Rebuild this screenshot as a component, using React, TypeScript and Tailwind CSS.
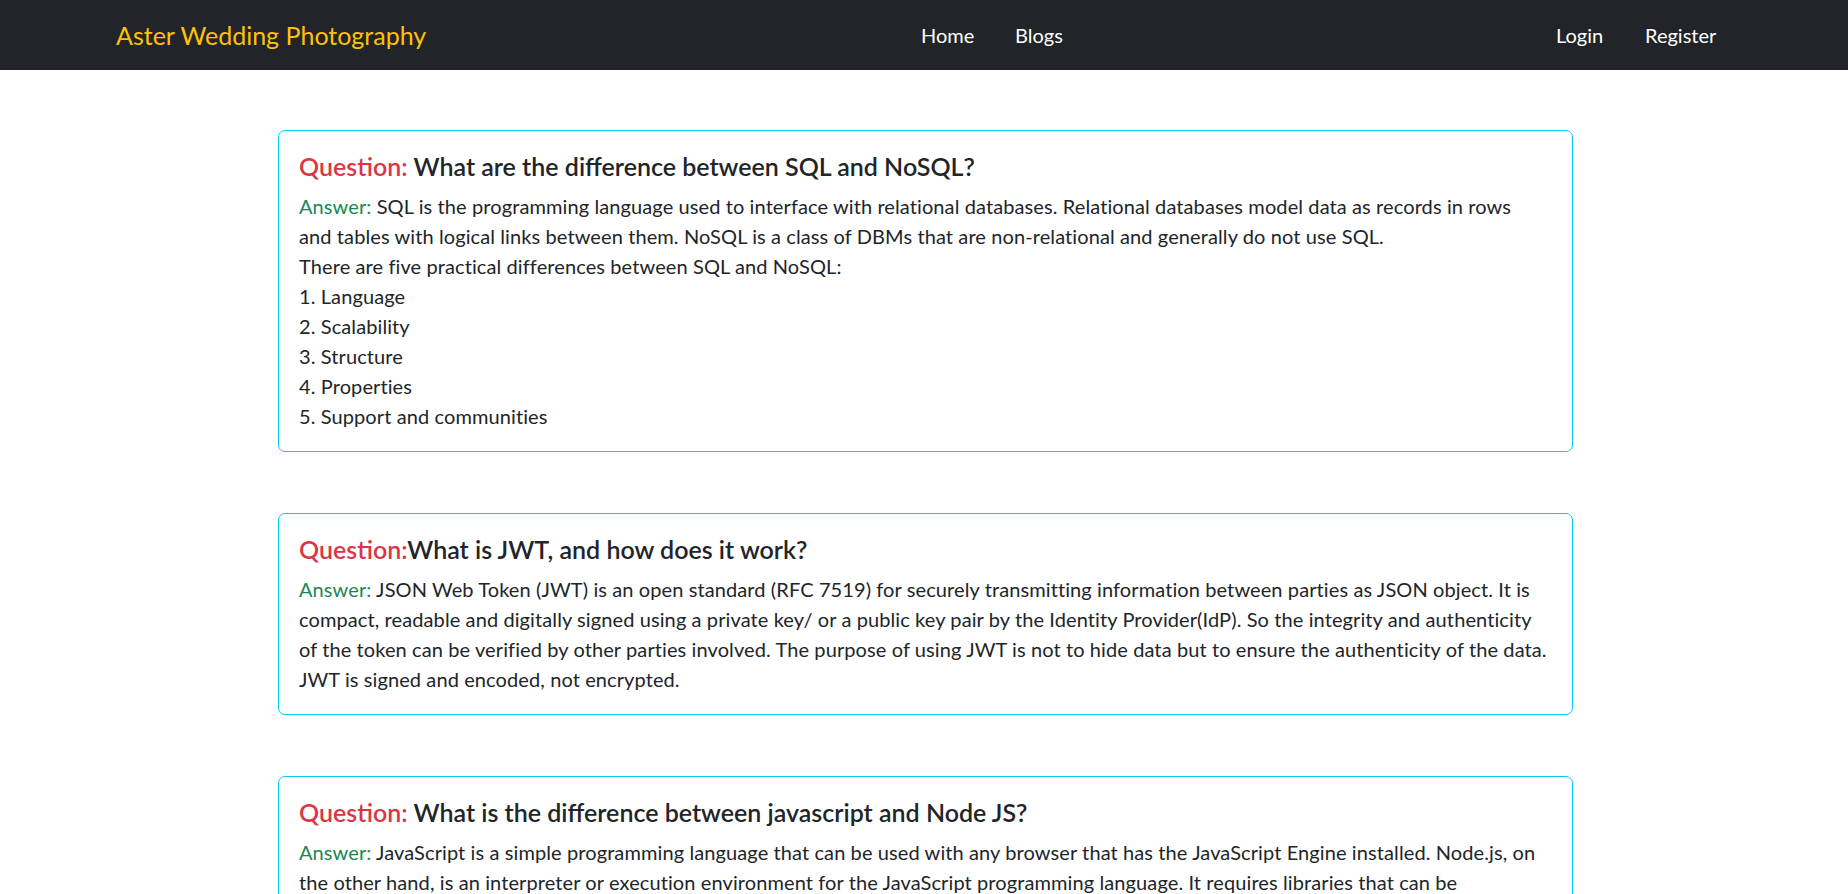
const faqs = [
  {
    question: "What are the difference between SQL and NoSQL?",
    spaced: true,
    answer: [
      "SQL is the programming language used to interface with relational databases. Relational databases model data as records in rows and tables with logical links between them. NoSQL is a class of DBMs that are non-relational and generally do not use SQL.",
      "There are five practical differences between SQL and NoSQL:",
      "1. Language",
      "2. Scalability",
      "3. Structure",
      "4. Properties",
      "5. Support and communities",
    ],
  },
  {
    question: "What is JWT, and how does it work?",
    spaced: false,
    answer: [
      "JSON Web Token (JWT) is an open standard (RFC 7519) for securely transmitting information between parties as JSON object. It is compact, readable and digitally signed using a private key/ or a public key pair by the Identity Provider(IdP). So the integrity and authenticity of the token can be verified by other parties involved. The purpose of using JWT is not to hide data but to ensure the authenticity of the data. JWT is signed and encoded, not encrypted.",
    ],
  },
  {
    question: "What is the difference between javascript and Node JS?",
    spaced: true,
    answer: [
      "JavaScript is a simple programming language that can be used with any browser that has the JavaScript Engine installed. Node.js, on the other hand, is an interpreter or execution environment for the JavaScript programming language. It requires libraries that can be conveniently accessed from JavaScript programming to be more helpful.",
      "JavaScript is used for client-side activity for a web application, while Node.js is mostly used on the server side.",
    ],
  },
];

function Navbar() {
  return (
    <nav className="h-[70px] bg-[#212529] flex items-center pl-[116px]">
      <a href="#" className="w-[805px] shrink-0 text-[25px] text-[#ffc107] leading-[38px]">
        Aster Wedding Photography
      </a>
      <ul className="w-[635px] shrink-0 flex items-center text-[20px] text-white">
        <li className="w-[94px]"><a href="#" className="block py-[10px]">Home</a></li>
        <li><a href="#" className="block py-[10px]">Blogs</a></li>
      </ul>
      <ul className="flex items-center text-[20px] text-white">
        <li className="w-[89px]"><a href="#" className="block py-[10px]">Login</a></li>
        <li><a href="#" className="block py-[10px]">Register</a></li>
      </ul>
    </nav>
  );
}

export default function App() {
  return (
    <div className="min-h-screen bg-white font-['Lato','Liberation_Sans',sans-serif] text-[#212529]">
      <Navbar />

      <main className="w-[1295px] ml-[278px] pt-[60px] pb-[60px] flex flex-col gap-[61px]">
        {faqs.map((faq, i) => (
          <div key={i} className="border border-[#0dcaf0] rounded-[7px] pt-[20px] pb-[20px] pl-[20px] pr-[24px]">
            <h5 className="text-[25px] font-semibold leading-[30px] mb-[10px]">
              <span className="text-[#dc3545]">{faq.spaced ? "Question: " : "Question:"}</span>
              {faq.question}
            </h5>
            <div className="text-[20px] leading-[30px] tracking-[0.1px]">
              {faq.answer.map((line, j) => (
                <p key={j}>
                  {j === 0 && <span className="text-[#198754]">Answer: </span>}
                  {line}
                </p>
              ))}
            </div>
          </div>
        ))}
      </main>
    </div>
  );
}
